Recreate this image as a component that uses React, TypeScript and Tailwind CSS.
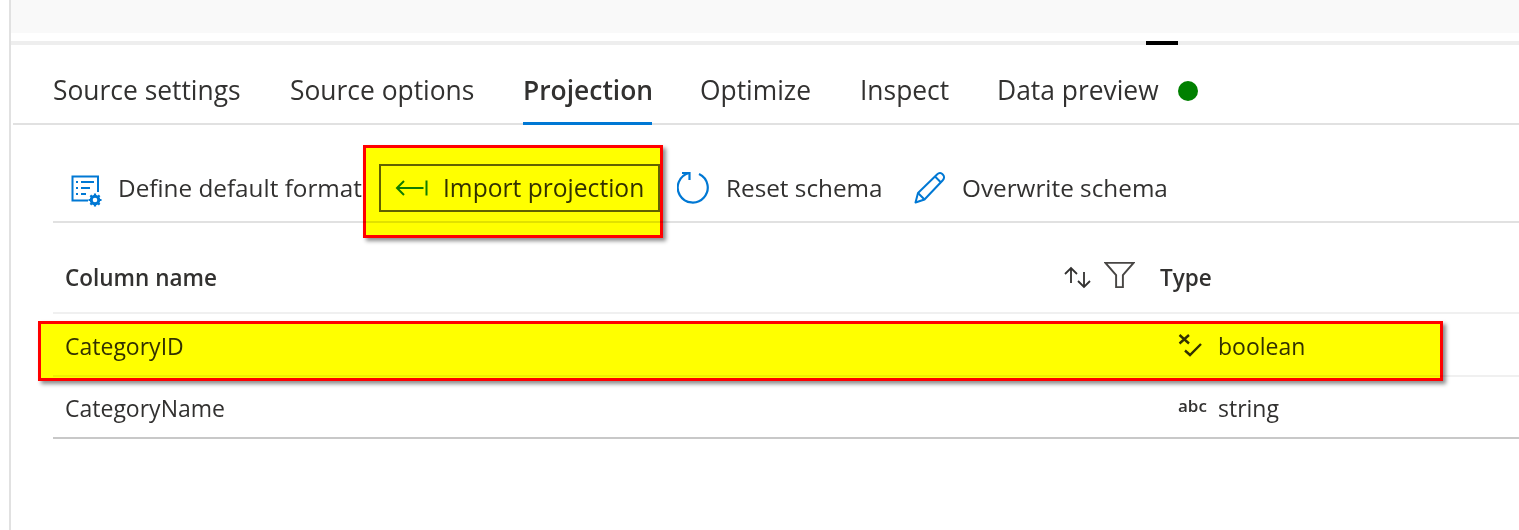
const font = "font-['Open_Sans',sans-serif]";

const tabs = [
  { label: 'Source settings', width: 'w-[189px]' },
  { label: 'Source options', width: 'w-[185px]' },
  { label: 'Projection', width: 'w-[129px]', active: true },
  { label: 'Optimize', width: 'w-[112px]' },
  { label: 'Inspect', width: 'w-[89px]' },
  { label: 'Data preview', width: 'w-[162px]' },
];

const FormatIcon = () => (
  <svg width="32" height="32" viewBox="0 0 32 32" fill="none" stroke="#0078d4" strokeWidth="2">
    <path d="M27 17V1.500H1.500V25.500H17" />
    <path d="M5 7h2M10 7h13M5 13h2M10 13h9M5 19h2M10 19h5" />
    <circle cx="24" cy="25" r="3.800" strokeWidth="3" />
    <path d="M24 18.500v2.500M24 29v2.500M17.500 25h2.500M28 25h2.500M19.400 20.400l1.800 1.800M26.800 27.800l1.800 1.800M19.400 29.600l1.800-1.800M26.800 22.200l1.800-1.800" strokeWidth="2.200" />
  </svg>
);

const ImportIcon = () => (
  <svg width="34" height="18" viewBox="0 0 34 18" fill="none" stroke="#107c10" strokeWidth="2">
    <path d="M2 9h26.500M9 2 2 9l7 7M31.500 1.500v15" />
  </svg>
);

const ResetIcon = () => (
  <svg width="34" height="34" viewBox="0 0 34 34" fill="none" stroke="#0078d4" strokeWidth="2.200">
    <path d="M22 2.900A15 15 0 1 1 12 2" />
    <path d="M5 2h7.500v7" />
  </svg>
);

const PencilIcon = () => (
  <svg width="32" height="32" viewBox="0 0 32 32" fill="none" stroke="#0078d4" strokeWidth="2" strokeLinejoin="round">
    <path d="M1.500 30.500 4 21 23 2.500c2-2 4.200-1.800 5.800 0 1.700 1.700 1.700 4 0 5.700L10.500 27.500z" />
    <path d="M4 21l6.500 6.500M21 4.500 27 10.500" />
  </svg>
);

const SortIcon = () => (
  <svg width="30" height="24" viewBox="0 0 30 24" fill="none" stroke="#323130" strokeWidth="1.800">
    <path d="M8 17V2M2 8l6-6 6 6M21 6v15M15 15l6 6 6-6" />
  </svg>
);

const FilterIcon = () => (
  <svg width="31" height="28" viewBox="0 0 32 28" fill="none" stroke="#484644" strokeWidth="2">
    <path d="M1.500 1.500h29L19.500 14v12.500h-7V14z" />
  </svg>
);

const BooleanIcon = () => (
  <svg width="26" height="24" viewBox="0 0 26 24" fill="none" stroke="#323130" strokeWidth="2.400">
    <path d="M1.500 2 11 10.500M11 2 1.500 10.500" />
    <path d="M7 17.500l5 4.500L23 11" />
  </svg>
);

const Highlight = ({ className }: { className: string }) => (
  <div
    className={`absolute border-[3px] border-[#ff0000] bg-[#ffff00] mix-blend-multiply shadow-[3px_3px_4px_rgba(0,0,0,0.45)] ${className}`}
  />
);

export default function App() {
  return (
    <div className={`relative w-[1519px] h-[530px] overflow-hidden bg-white text-[#323130] ${font}`}>
      <div className="ml-[9px] h-full border-l-[2px] border-[#e1e1e1]">
        <div className="h-[33px] bg-[#f9f9f9]" />
        <div className="mt-[8px] h-[4px] bg-[#eeeeee] flex">
          <div className="ml-[1135px] w-[32px] bg-black" />
        </div>

        <div className="ml-[2px] h-[80px] border-b-2 border-[#e1e1e1] pl-[40px] flex items-end gap-[48px]">
          {tabs.map((tab) => (
            <div
              key={tab.label}
              className={`${tab.width} h-full flex items-center whitespace-nowrap text-[26.400px] pt-[13px] border-b-[3px] -mb-[2px] ${
                tab.active ? 'font-semibold border-[#0078d4]' : 'border-transparent'
              }`}
            >
              {tab.label}
            </div>
          ))}
          <div className="-ml-[29px] mb-[22px] w-[20px] h-[20px] rounded-full bg-[#008000] self-end" />
        </div>

        <div className="ml-[42px] h-[98px] border-b-2 border-[#e1e1e1] pt-[39px] text-[24.300px]">
          <div className="h-[48px] flex items-center">
            <div className="ml-[18px] w-[47px] mt-[6px]"><FormatIcon /></div>
            <span className="w-[261px] whitespace-nowrap overflow-hidden">Define default format</span>
            <div className="w-[281px] h-[48px] border-2 border-[#616161] flex items-center pl-[14px] gap-[14px] whitespace-nowrap">
              <ImportIcon />
              <span className="text-[24.600px]">Import projection</span>
            </div>
            <div className="ml-[17px] w-[49px]"><ResetIcon /></div>
            <span className="w-[188px] whitespace-nowrap">Reset schema</span>
            <div className="w-[48px]"><PencilIcon /></div>
            <span className="whitespace-nowrap">Overwrite schema</span>
          </div>
        </div>

        <div className="ml-[42px] text-[23px]">
          <div className="h-[91px] border-b-2 border-[#f0f0f0] flex items-center pl-[12px] pt-[20px] font-semibold text-[22.500px]">
            <span className="w-[998px]">Column name</span>
            <div className="w-[41px]"><SortIcon /></div>
            <div className="w-[56px] -mt-[6px]"><FilterIcon /></div>
            <span>Type</span>
          </div>
          <div className="h-[63px] border-b-2 border-[#f0f0f0] flex items-center pl-[12px] pt-[4px]">
            <span className="w-[1113px]">CategoryID</span>
            <div className="w-[40px] -mt-[4px]"><BooleanIcon /></div>
            <span>boolean</span>
          </div>
          <div className="h-[62px] border-b-2 border-[#c8c8c8] flex items-center pl-[12px] pt-[3px]">
            <span className="w-[1113px]">CategoryName</span>
            <span className="w-[40px] font-semibold text-[17px] -mt-[6px]">abc</span>
            <span>string</span>
          </div>
        </div>
      </div>

      <Highlight className="left-[363px] top-[145px] w-[300px] h-[93px]" />
      <Highlight className="left-[38px] top-[321px] w-[1405px] h-[60px]" />
    </div>
  );
}
